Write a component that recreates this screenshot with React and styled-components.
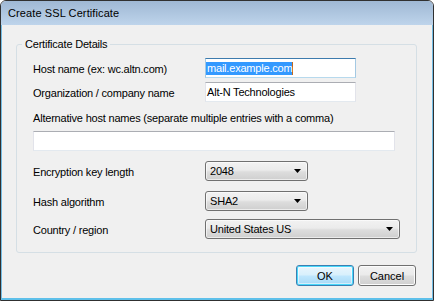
import React from "react";
import styled, { createGlobalStyle } from "styled-components";

const Global = createGlobalStyle`
  html, body { margin: 0; padding: 0; background: #ffffff; }
  * { box-sizing: border-box; }
`;

const Window = styled.div`
  width: 434px;
  height: 301px;
  border: 1px solid #303030;
  border-radius: 6px 6px 0 0;
  display: flex;
  flex-direction: column;
  overflow: hidden;
  font-family: "Liberation Sans", Arial, sans-serif;
  font-size: 11px;
  color: #000;
`;

const TitleBar = styled.div`
  height: 24px;
  flex: none;
  display: flex;
  align-items: center;
  padding-left: 7px;
  background: linear-gradient(#9fb8d4, #bed4eb);
  letter-spacing: 0.1px;
`;

const Body = styled.div`
  flex: 1;
  background: #f0f0f0;
  border-left: 1px solid #74bde4;
  border-right: 1px solid #74bde4;
  border-bottom: 2px solid #5ec0ea;
  display: flex;
  flex-direction: column;
  letter-spacing: -0.2px;
`;

const GroupBox = styled.div`
  margin: 19px 15px 0 14px;
  border: 1px solid #d5dfe5;
  border-radius: 3px;
  padding: 0 0 13px 16px;
  display: flex;
  flex-direction: column;
`;

const Legend = styled.div`
  width: fit-content;
  margin: -7px 0 0 -11px;
  padding: 0 3px;
  line-height: 13px;
  background: #f0f0f0;
`;

const Row = styled.div`
  display: flex;
  align-items: center;
  height: 20px;
  margin-top: ${(p) => p.$gap}px;
`;

const Label = styled.div`
  width: ${(p) => p.$w || 172}px;
  flex: none;
  line-height: 13px;
  padding-top: 3px;
`;

const BlockLabel = styled.div`
  line-height: 13px;
  margin-top: ${(p) => p.$gap}px;
`;

const TextBox = styled.div`
  width: ${(p) => p.$w}px;
  height: 20px;
  margin-top: ${(p) => p.$gap || 0}px;
  background: #fff;
  border: 1px solid;
  border-color: ${(p) =>
    p.$focus
      ? "#3d7bad #a4c9e3 #b7d9ed #a4c9e3"
      : "#abadb3 #e2e3ea #e3e9ef #e2e3ea"};
  display: flex;
  align-items: center;
  padding-left: ${(p) => (p.$focus ? 0 : 1)}px;
  line-height: 13px;
  white-space: nowrap;
`;

const Selected = styled.span`
  background: #3399ff;
  color: #fff;
  padding-left: 1px;
  border-right: 1px solid #c26a1e;
  line-height: 13px;
`;

const Combo = styled.div`
  width: ${(p) => p.$w}px;
  height: 20px;
  border: 1px solid #707070;
  border-radius: 3px;
  background: linear-gradient(#f2f2f2 0%, #ebebeb 45%, #dddddd 55%, #cfcfcf 100%);
  box-shadow: inset 0 0 0 1px rgba(255, 255, 255, 0.6);
  display: flex;
  align-items: center;
  justify-content: space-between;
  padding: 0 6px 0 4px;
  line-height: 13px;
`;

const Arrow = styled.svg`
  width: 7px;
  height: 4px;
  flex: none;
`;

const Footer = styled.div`
  display: flex;
  justify-content: flex-end;
  gap: 4px;
  margin-top: 12px;
  padding-right: 16px;
`;

const Button = styled.div`
  width: 58px;
  height: 21px;
  border: 1px solid ${(p) => (p.$default ? "#3c7fb1" : "#707070")};
  border-radius: 3px;
  display: flex;
  align-items: center;
  justify-content: center;
  letter-spacing: 0;
  background: ${(p) =>
    p.$default
      ? "linear-gradient(#eaf6fd 0%, #d9f0fc 45%, #bee6fd 55%, #a7d9f5 100%)"
      : "linear-gradient(#f2f2f2 0%, #ebebeb 45%, #dddddd 55%, #cfcfcf 100%)"};
  box-shadow: ${(p) =>
    p.$default
      ? "inset 0 0 0 1px #48d8fb, inset 0 0 0 2px rgba(255,255,255,0.5)"
      : "inset 0 0 0 1px #fcfcfc"};
`;

const DropArrow = () => (
  <Arrow viewBox="0 0 7 4">
    <path d="M0 0H7L3.5 4Z" fill="#000" />
  </Arrow>
);

export default function App() {
  return (
    <>
      <Global />
      <Window>
        <TitleBar>Create SSL Certificate</TitleBar>
        <Body>
          <GroupBox>
            <Legend>Certificate Details</Legend>
            <Row $gap={7}>
              <Label>Host name (ex: wc.altn.com)</Label>
              <TextBox $w={151} $focus>
                <Selected>mail.example.com</Selected>
              </TextBox>
            </Row>
            <Row $gap={4}>
              <Label>Organization / company name</Label>
              <TextBox $w={151}>Alt-N Technologies</TextBox>
            </Row>
            <BlockLabel $gap={10}>
              Alternative host names (separate multiple entries with a comma)
            </BlockLabel>
            <TextBox $w={362} $gap={6} />
            <Row $gap={10}>
              <Label>Encryption key length</Label>
              <Combo $w={103}>
                2048
                <DropArrow />
              </Combo>
            </Row>
            <Row $gap={10}>
              <Label>Hash algorithm</Label>
              <Combo $w={103}>
                SHA2
                <DropArrow />
              </Combo>
            </Row>
            <Row $gap={8}>
              <Label>Country / region</Label>
              <Combo $w={195}>
                United States US
                <DropArrow />
              </Combo>
            </Row>
          </GroupBox>
          <Footer>
            <Button $default>OK</Button>
            <Button>Cancel</Button>
          </Footer>
        </Body>
      </Window>
    </>
  );
}
